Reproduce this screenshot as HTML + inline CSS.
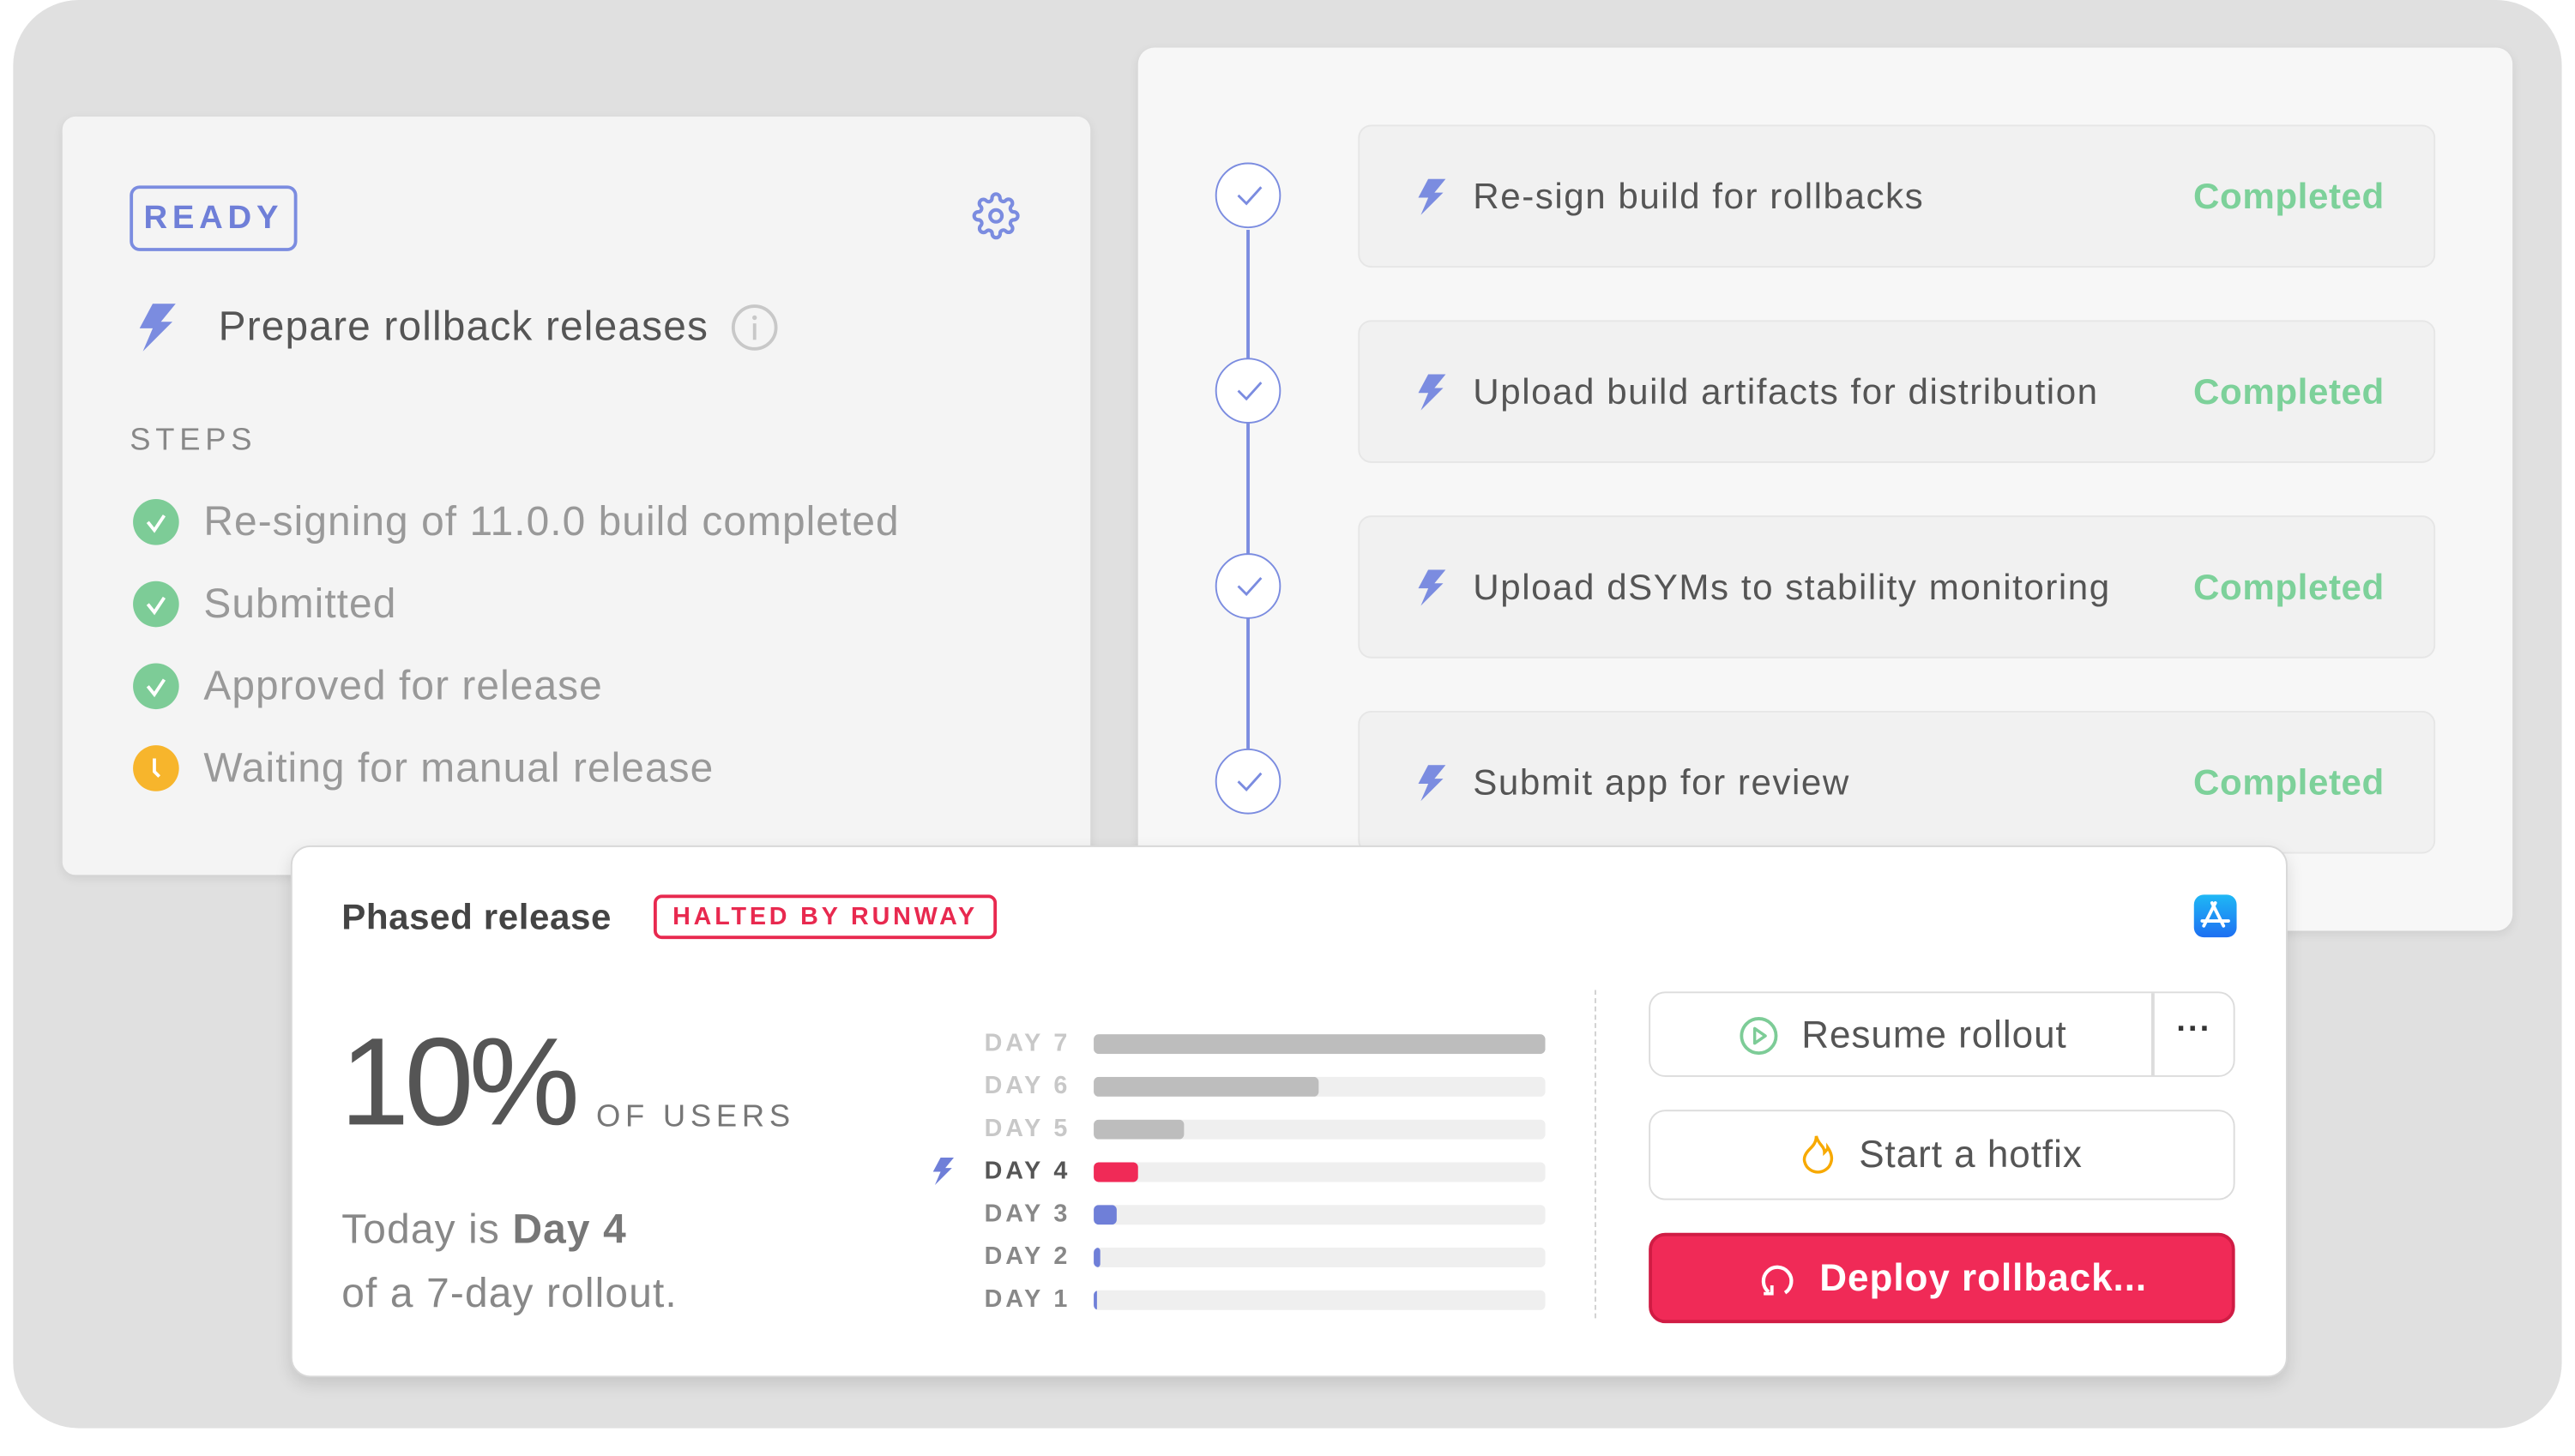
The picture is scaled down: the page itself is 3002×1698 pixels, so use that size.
<!DOCTYPE html>
<html><head><meta charset="utf-8"><style>
html,body{margin:0;padding:0;background:#fff;overflow:hidden}
body{width:3002px;height:1698px;position:relative;font-family:"Liberation Sans",sans-serif}
#w{position:absolute;left:0;top:0;width:1568px;height:887px;transform:scale(1.9145);transform-origin:0 0}
.a{position:absolute}
.bg{left:8px;top:0;width:1552px;height:870px;background:#e0e0e0;border-radius:40px}
.lc{left:38px;top:71px;width:626px;height:462px;background:#f4f4f4;border-radius:8px;box-shadow:0 2px 6px rgba(0,0,0,.08)}
.rc{left:693px;top:29px;width:837px;height:538px;background:#f7f7f7;border-radius:10px;box-shadow:0 2px 6px rgba(0,0,0,.08)}
.ready{left:79px;top:113px;height:36px;border:2px solid #7b8ce0;border-radius:6px;color:#6f7fd8;font-size:20px;font-weight:bold;letter-spacing:3px;text-align:center;line-height:36px;box-sizing:content-box;width:98px}
.t25{font-size:25px;color:#555;letter-spacing:.6px}
.step{font-size:25px;color:#999;left:124px;letter-spacing:.55px}
.ck{width:28px;height:28px;border-radius:50%;background:#7dcc97;left:81px}
.circ{left:740px;width:38px;height:38px;border:1.5px solid #7b8ce0;border-radius:50%;background:#fff}
.row{left:827px;width:656px;height:87px;background:#f1f1f1;border:1px solid #e6e6e6;border-radius:8px;box-sizing:border-box}
.row .tx{position:absolute;left:69px;top:0;line-height:85px;font-size:22px;color:#555;letter-spacing:.8px}
.row .cp{position:absolute;right:30px;top:0;line-height:85px;font-size:22px;color:#7dd19a;font-weight:bold;letter-spacing:.3px}
.row svg{position:absolute;left:34px;top:32px}
.bc{left:177px;top:515px;width:1216px;height:324px;background:#fff;border:1px solid #d8d8d8;border-radius:12px;box-sizing:border-box;box-shadow:0 4px 10px rgba(0,0,0,.12)}
.lbl{left:560px;width:92px;text-align:right;font-size:15px;font-weight:bold;letter-spacing:2px;color:#c8c8c8;line-height:16px}
.bar{left:666px;width:275px;height:12px;background:#efefef;border-radius:3px;overflow:hidden}
.bar div{height:12px;border-radius:3px}
.btn{left:1004px;width:357px;border:1.5px solid #dcdcdc;border-radius:10px;box-sizing:border-box;background:#fff;font-size:23px;color:#555;letter-spacing:.5px}
</style></head><body><div id="w">
<div class="a bg"></div>
<div class="a lc"></div>
<div class="a ready">READY</div>
<svg class="a" style="left:592px;top:117px" width="29" height="29" viewBox="0 0 24 24" fill="none" stroke="#7b8ce0" stroke-width="1.8"><circle cx="12" cy="12" r="3"/><path d="M19.4 15a1.65 1.65 0 0 0 .33 1.82l.06.06a2 2 0 1 1-2.830 2.83l-.06-.06a1.65 1.65 0 0 0-1.82-.33 1.65 1.65 0 0 0-1 1.51V21a2 2 0 1 1-4 0v-.09A1.65 1.65 0 0 0 9 19.4a1.65 1.65 0 0 0-1.82.33l-.06.06a2 2 0 1 1-2.83-2.83l.06-.06A1.65 1.65 0 0 0 4.68 15a1.65 1.65 0 0 0-1.51-1H3a2 2 0 1 1 0-4h.09A1.65 1.65 0 0 0 4.6 9a1.65 1.65 0 0 0-.33-1.82l-.06-.06a2 2 0 1 1 2.83-2.83l.06.06A1.65 1.65 0 0 0 9 4.68a1.65 1.65 0 0 0 1-1.51V3a2 2 0 1 1 4 0v.09a1.65 1.65 0 0 0 1 1.51 1.65 1.65 0 0 0 1.82-.33l.06-.06a2 2 0 1 1 2.83 2.83l-.06.06A1.65 1.65 0 0 0 19.4 9a1.65 1.65 0 0 0 1.51 1H21a2 2 0 1 1 0 4h-.09a1.65 1.65 0 0 0-1.51 1z"/></svg>
<svg class="a" style="left:83px;top:185px" width="26" height="29" viewBox="0 0 26 29"><path d="M10 0h14L15 11h7L4 29l6-14H2z" fill="#7b8ce0"/></svg>
<div class="a t25" style="left:133px;top:185px">Prepare rollback releases</div>
<svg class="a" style="left:445px;top:185px" width="29" height="29"><circle cx="14.5" cy="14.5" r="13" fill="none" stroke="#c8c8c8" stroke-width="2"/><rect x="13.5" y="12" width="2" height="10" fill="#c8c8c8"/><circle cx="14.5" cy="8.5" r="1.4" fill="#c8c8c8"/></svg>
<div class="a" style="left:79px;top:258px;font-size:19px;letter-spacing:3px;color:#888">STEPS</div>
<div class="a ck" style="top:304px"></div><svg class="a" style="left:81px;top:304px" width="28" height="28"><path d="M9 14l4 5 6-9" fill="none" stroke="#fff" stroke-width="2"/></svg>
<div class="a step" style="top:304px">Re-signing of 11.0.0 build completed</div>
<div class="a ck" style="top:354px"></div><svg class="a" style="left:81px;top:354px" width="28" height="28"><path d="M9 14l4 5 6-9" fill="none" stroke="#fff" stroke-width="2"/></svg>
<div class="a step" style="top:354px">Submitted</div>
<div class="a ck" style="top:404px"></div><svg class="a" style="left:81px;top:404px" width="28" height="28"><path d="M9 14l4 5 6-9" fill="none" stroke="#fff" stroke-width="2"/></svg>
<div class="a step" style="top:404px">Approved for release</div>
<div class="a ck" style="top:454px;background:#f7b52c"></div><svg class="a" style="left:81px;top:454px" width="28" height="28"><path d="M13 8v8l3 3" fill="none" stroke="#fff" stroke-width="2"/></svg>
<div class="a step" style="top:454px">Waiting for manual release</div>

<div class="a rc"></div>
<div class="a" style="left:759px;top:140px;width:1.5px;height:316px;background:#7b8ce0"></div>
<div class="a circ" style="top:99px"></div><div class="a circ" style="top:218px"></div><div class="a circ" style="top:337px"></div><div class="a circ" style="top:456px"></div>
<svg class="a" style="left:740px;top:99px" width="41" height="400"><g fill="none" stroke="#7b8ce0" stroke-width="1.5"><path d="M14 20l5 5 9-10"/><path d="M14 139l5 5 9-10"/><path d="M14 258l5 5 9-10"/><path d="M14 377l5 5 9-10"/></g></svg>
<div class="a row" style="top:76px"><svg width="20" height="22" viewBox="0 0 26 29"><path d="M10 0h14L15 11h7L4 29l6-14H2z" fill="#7b8ce0"/></svg><div class="tx">Re-sign build for rollbacks</div><div class="cp">Completed</div></div>
<div class="a row" style="top:195px"><svg width="20" height="22" viewBox="0 0 26 29"><path d="M10 0h14L15 11h7L4 29l6-14H2z" fill="#7b8ce0"/></svg><div class="tx">Upload build artifacts for distribution</div><div class="cp">Completed</div></div>
<div class="a row" style="top:314px"><svg width="20" height="22" viewBox="0 0 26 29"><path d="M10 0h14L15 11h7L4 29l6-14H2z" fill="#7b8ce0"/></svg><div class="tx">Upload dSYMs to stability monitoring</div><div class="cp">Completed</div></div>
<div class="a row" style="top:433px"><svg width="20" height="22" viewBox="0 0 26 29"><path d="M10 0h14L15 11h7L4 29l6-14H2z" fill="#7b8ce0"/></svg><div class="tx">Submit app for review</div><div class="cp">Completed</div></div>

<div class="a bc"></div>
<div class="a" style="left:208px;top:546px;font-size:22px;font-weight:bold;color:#444;letter-spacing:.3px">Phased release</div>
<div class="a" style="left:398px;top:545px;width:209px;height:27px;border:2px solid #e8294f;border-radius:5px;box-sizing:border-box;color:#e8294f;font-size:15px;font-weight:bold;letter-spacing:2px;text-align:center;line-height:23px">HALTED BY RUNWAY</div>
<div class="a" style="left:1336px;top:545px;width:26px;height:26px;border-radius:6px;background:linear-gradient(#1fb8f5,#1d6ff2)"></div>
<svg class="a" style="left:1336px;top:545px" width="26" height="26"><g stroke="#fff" stroke-width="2" stroke-linecap="round"><path d="M13 5l-7 14M11 5l7 14M5 16h16"/></g></svg>
<div class="a" style="left:207px;top:614px;font-size:76px;color:#555;letter-spacing:-3px;line-height:92px">10%</div>
<div class="a" style="left:363px;top:670px;font-size:19px;letter-spacing:3px;color:#777">OF USERS</div>
<div class="a t25" style="left:208px;top:735px;color:#888">Today is <b style="color:#777">Day 4</b></div>
<div class="a t25" style="left:208px;top:774px;color:#888">of a 7-day rollout.</div>
<div class="a lbl" style="top:628px">DAY 7</div><div class="a bar" style="top:630px"><div style="width:275px;background:#bdbdbd"></div></div>
<div class="a lbl" style="top:654px">DAY 6</div><div class="a bar" style="top:656px"><div style="width:137px;background:#bdbdbd"></div></div>
<div class="a lbl" style="top:680px">DAY 5</div><div class="a bar" style="top:682px"><div style="width:55px;background:#bdbdbd"></div></div>
<svg class="a" style="left:567px;top:704px" width="15" height="19" viewBox="0 0 26 29"><path d="M10 0h14L15 11h7L4 29l6-14H2z" fill="#6f7fd8"/></svg>
<div class="a lbl" style="top:706px;color:#555">DAY 4</div><div class="a bar" style="top:708px"><div style="width:27px;background:#f02a57"></div></div>
<div class="a lbl" style="top:732px;color:#888">DAY 3</div><div class="a bar" style="top:734px"><div style="width:14px;background:#6f7fd8"></div></div>
<div class="a lbl" style="top:758px;color:#888">DAY 2</div><div class="a bar" style="top:760px"><div style="width:4px;background:#6f7fd8"></div></div>
<div class="a lbl" style="top:784px;color:#888">DAY 1</div><div class="a bar" style="top:786px"><div style="width:2px;background:#6f7fd8"></div></div>
<div class="a" style="left:971px;top:603px;height:200px;border-left:1.5px dashed #d0d0d0"></div>
<div class="a btn" style="top:604px;height:52px"><div class="a" style="left:305px;top:0;width:1.5px;height:50px;background:#dcdcdc"></div>
<svg class="a" style="left:54px;top:14px" width="24" height="24"><circle cx="12" cy="12" r="10.5" fill="none" stroke="#7dcc97" stroke-width="2"/><path d="M9.5 7.5v9l6.5-4.5z" fill="none" stroke="#7dcc97" stroke-width="1.8" stroke-linejoin="round"/></svg>
<div class="a" style="left:92px;top:0;line-height:50px">Resume rollout</div>
<div class="a" style="left:306px;top:0;width:50px;line-height:44px;text-align:center;font-size:20px;color:#333;font-weight:bold">···</div></div>
<div class="a btn" style="top:676px;height:55px">
<svg class="a" style="left:90px;top:13px" width="24" height="28" viewBox="0 0 24 28"><path d="M11 2c1 5 5 6 5 10 1-1 2-2 2-3 2 3 3 6 2 9-1 4-5 6-8 6s-7-2-8-6c-1-3 1-6 3-8 2-2 4-4 4-8z" fill="none" stroke="#f7a900" stroke-width="1.8"/></svg>
<div class="a" style="left:127px;top:0;line-height:52px">Start a hotfix</div></div>
<div class="a btn" style="top:751px;height:55px;background:#f02a57;border:2px solid #d01c44;color:#fff;font-weight:bold">
<svg class="a" style="left:64px;top:15px" width="24" height="24"><path d="M7 19A8.5 8.5 0 1 1 17 19.5" fill="none" stroke="#fff" stroke-width="2.2"/><path d="M4 20h5v-5" fill="none" stroke="#fff" stroke-width="2"/></svg>
<div class="a" style="left:102px;top:0;line-height:51px">Deploy rollback...</div></div>
</div></body></html>
